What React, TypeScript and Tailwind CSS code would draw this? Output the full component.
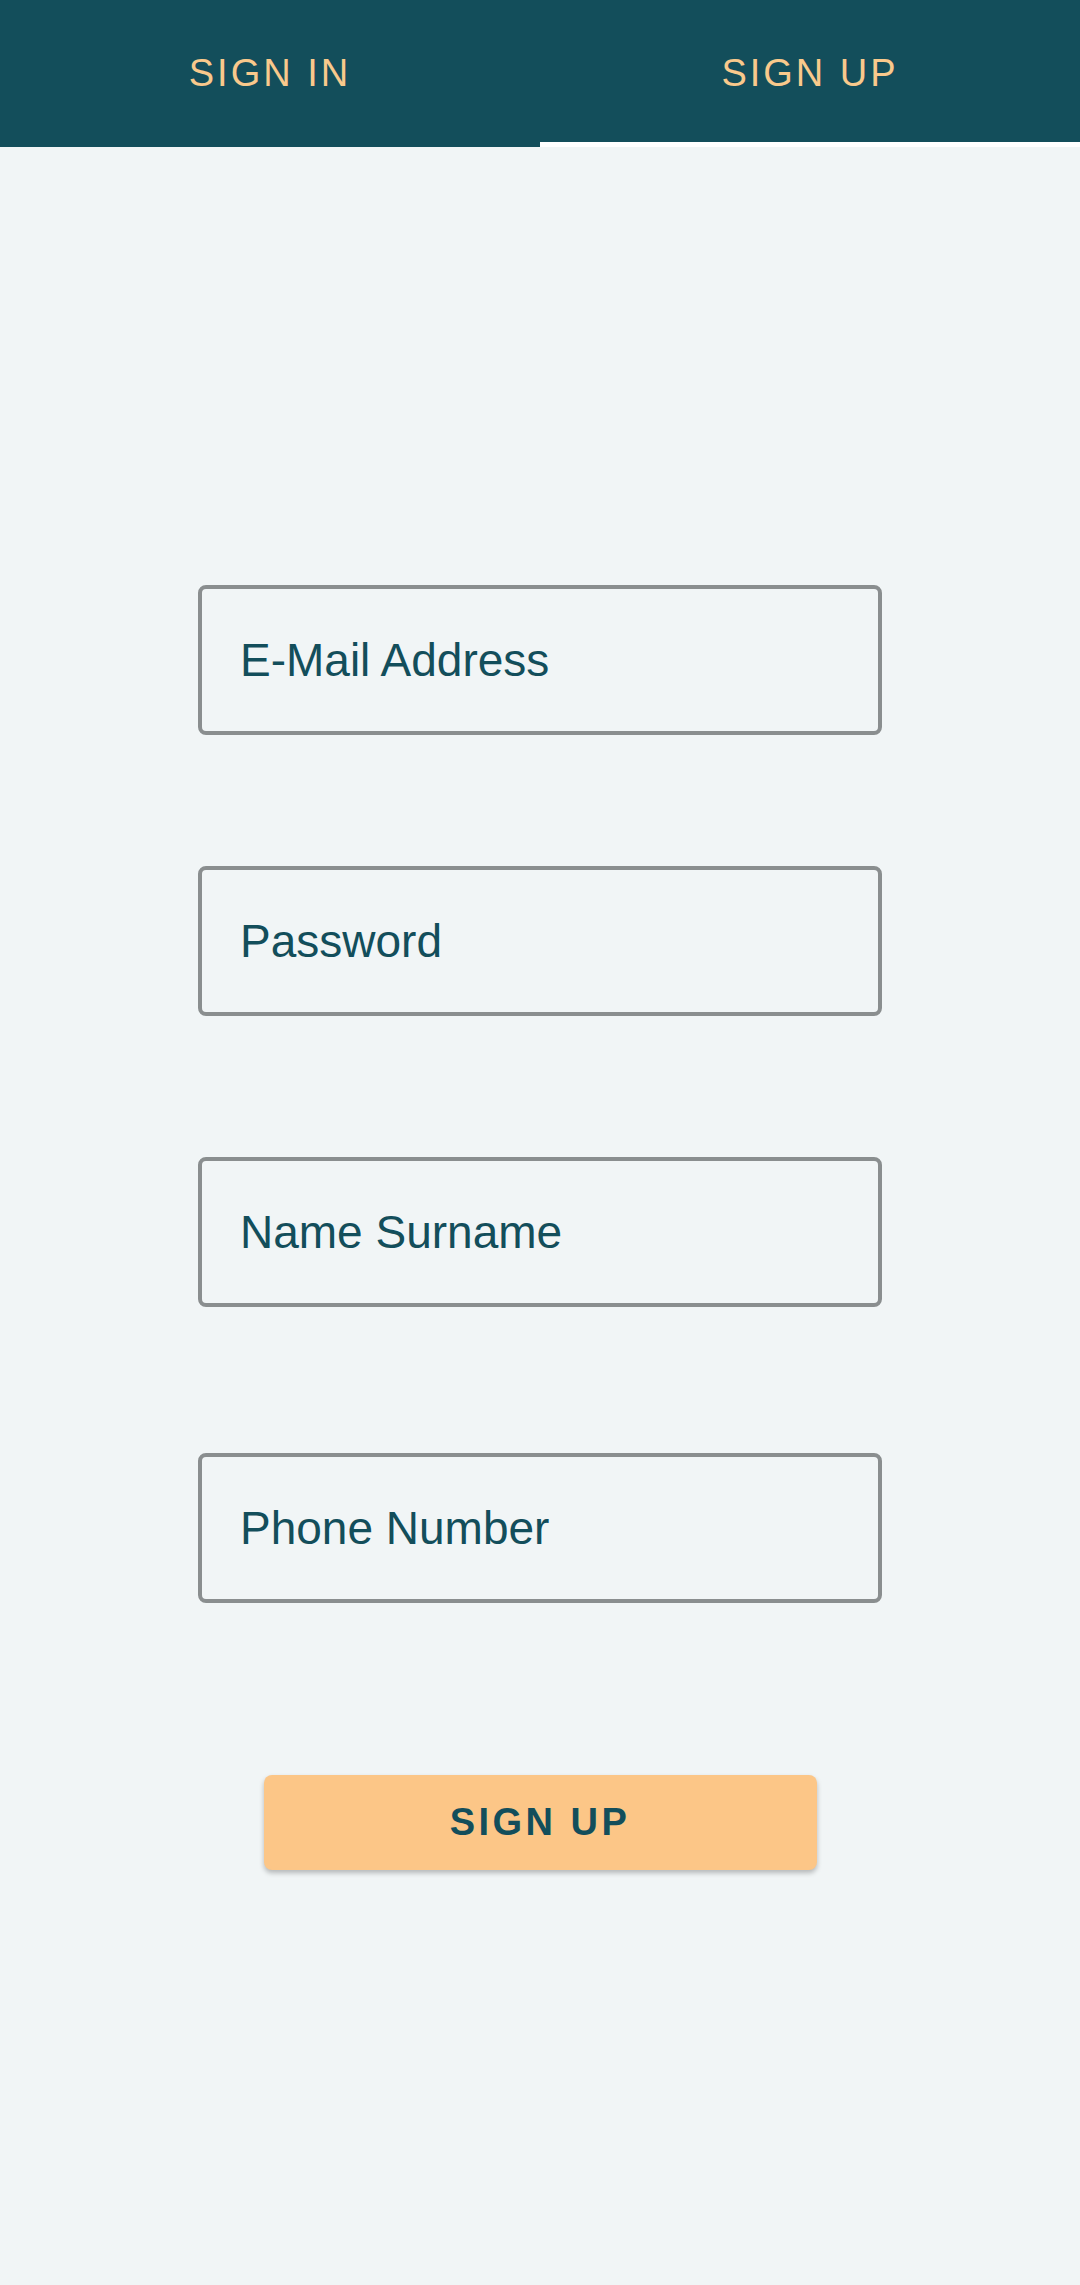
import { useState } from "react";

const fields = ["E-Mail Address", "Password", "Name Surname", "Phone Number"];

// vertical gap above each field box, in px
const fieldGaps = ["mt-[438px]", "mt-[131px]", "mt-[141px]", "mt-[146px]"];

const App = () => {
  const [tab, setTab] = useState<"in" | "up">("up");

  return (
    <div
      className="min-h-[2285px] w-full bg-[#f1f5f6]"
      style={{ fontFamily: '"Liberation Sans", Arial, sans-serif' }}
    >
      {/* Tabs */}
      <div className="flex h-[147px] bg-[#134e5b]">
        <button
          onClick={() => setTab("in")}
          className={`flex flex-1 items-center justify-center border-b-[5px] pt-[5px] text-[38px] tracking-[3px] text-[#f9c98c] ${
            tab === "in" ? "border-white" : "border-transparent"
          }`}
        >
          SIGN IN
        </button>
        <button
          onClick={() => setTab("up")}
          className={`flex flex-1 items-center justify-center border-b-[5px] pt-[5px] text-[38px] tracking-[3px] text-[#f9c98c] ${
            tab === "up" ? "border-white" : "border-transparent"
          }`}
        >
          SIGN UP
        </button>
      </div>

      {/* Form */}
      <div className="flex flex-col items-center">
        {fields.map((label, i) => (
          <div
            key={label}
            className={`${fieldGaps[i]} flex h-[150px] w-[684px] items-center rounded-[8px] border-[4px] border-[#8a8e8f] px-[38px]`}
          >
            <span className="text-[46px] text-[#134e5b]">{label}</span>
          </div>
        ))}

        <button className="mt-[172px] flex h-[95px] w-[553px] items-center justify-center rounded-[8px] bg-[#fcc687] text-[38px] font-bold tracking-[3.5px] text-[#134e5b] shadow-[0_3px_5px_rgba(0,0,0,0.25)]">
          SIGN UP
        </button>
      </div>
    </div>
  );
};

export default App;
